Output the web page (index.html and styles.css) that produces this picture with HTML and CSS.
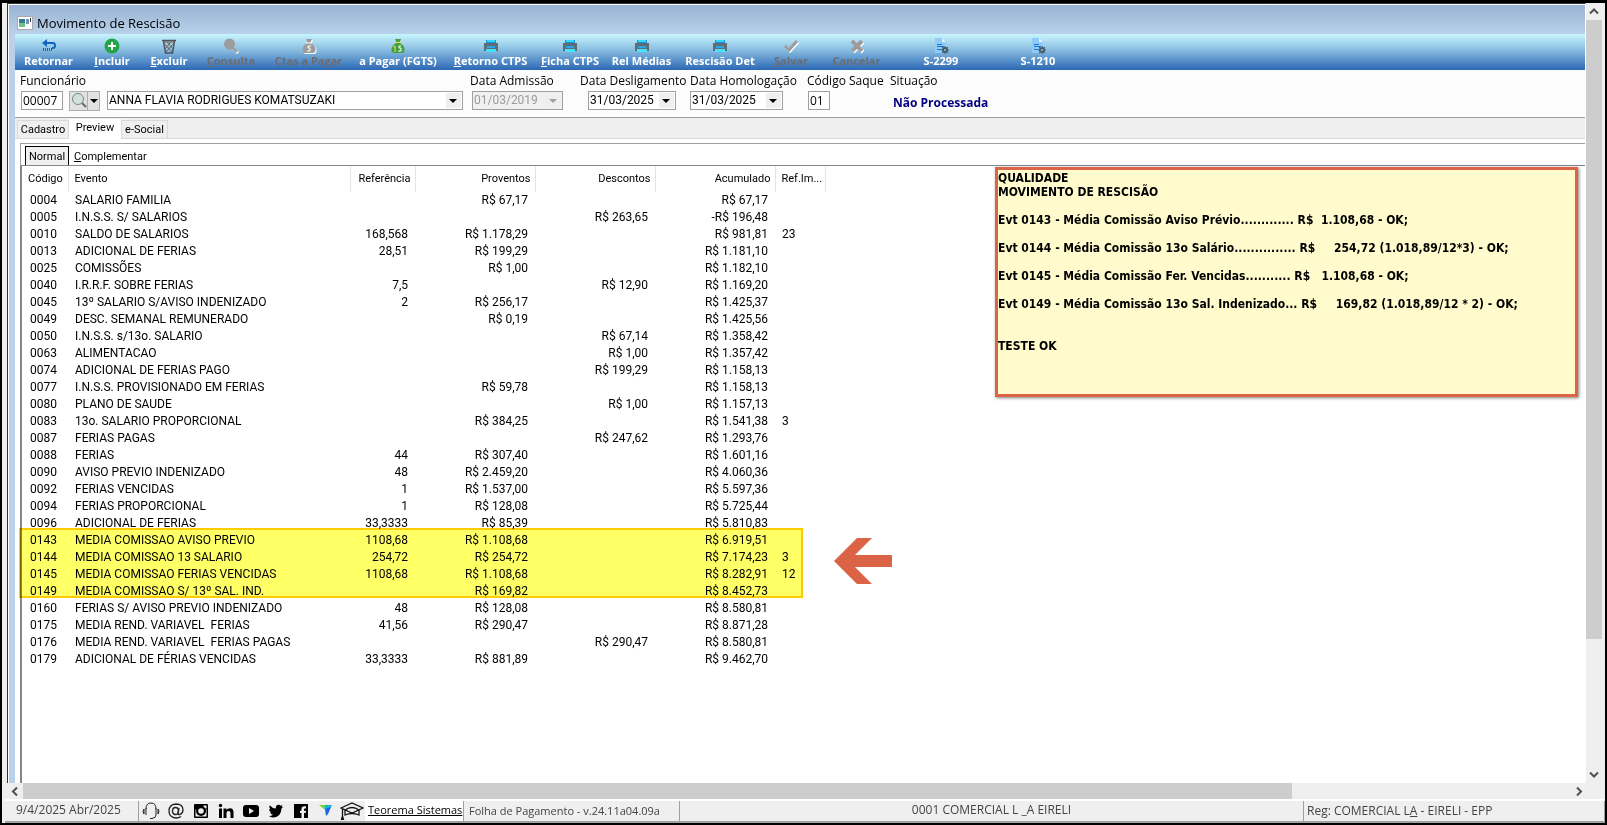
FILE: index.html
```html
<!DOCTYPE html>
<html lang="pt-br">

<head>
    <meta charset="UTF-8">
    <meta name="viewport" content="width=device-width, initial-scale=1.0">
    <title>Movimento de Rescisão</title>
    <link rel="stylesheet" href="styles.css">
</head>

<body>
    <svg class="defs">
        <symbol id="printer" viewBox="0 0 16 16">
            <path fill="#1c8fe0" d="M3 2h10v4H3z" />
            <path fill="#35d8f5" d="M4 2h8v2H4z" />
            <path fill="#5f6b75" d="M1 5h14v8H1z" />
            <path fill="#27a9e8" d="M4 8h8v2H4z" />
            <path fill="#45e2fa" d="M3 11h10v3H3z" />
        </symbol>
        <symbol id="bag" viewBox="0 0 16 16">
            <path d="M5 1h6L9.500 4.500C12 6 15 9 14.500 12.500 14.300 14 13.500 15 12 15H4c-1.500 0-2.300-1-2.500-2.500C1 9 4 6 6.500 4.500z" />
        </symbol>
        <symbol id="doc" viewBox="0 0 16 16">
            <path fill="#90caf9" d="M2 0h7l4 4v11H2z" />
            <path fill="#e1f5fe" d="M9 0l4 4H9z" />
            <path fill="#1976d2" d="M4 6h5v1H4zM4 8h7v1H4zM4 11h4v1H4z" />
            <circle cx="12" cy="12" r="2" fill="none" stroke="#455a64" stroke-width="2" />
            <path stroke="#455a64" d="M12 8v2M12 14v2M8 12h2M14 12h2M9 9l1 1M14 14l1 1M15 9l-1 1M10 14l-1 1" />
        </symbol>
    </svg>

    <div id="screen">
        <div class="work">
            <main class="window">
                <h1 class="title">
                    <svg width="16" height="14" viewBox="0 0 16 14">
                        <path fill="#fff" stroke="#a9a9a9" d="M.5.500h15v13H.5z" />
                        <path fill="#2f7f8f" d="M2 3h6v8H2z" />
                        <path fill="#6fc08a" d="M2 7h6v4H2z" />
                        <path fill="#7d8fb5" d="M9 3h3v5H9z" />
                        <path fill="#234" d="M13 2h1v4h-1z" />
                    </svg>
                    Movimento de Rescisão
                </h1>

                <nav class="toolbar">
                    <button type="button">
                        <svg viewBox="0 0 16 16">
                            <path fill="none" stroke="#1565c0" stroke-width="2" d="M3 5h9q2 0 2 2.500T12 10h-1" />
                            <path fill="#1565c0" d="M1 5l5-4v8z" />
                            <path stroke="#1565c0" d="M2.500 10v3M4.500 10v3M6.500 10v3M8.500 10v3M10.500 10v3" />
                        </svg>
                        Retornar
                    </button>
                    <button type="button">
                        <svg viewBox="0 0 16 16">
                            <circle cx="8" cy="8" r="7.500" fill="#22a447" />
                            <path stroke="#fff" stroke-width="2" d="M8 4v8M4 8h8" />
                        </svg>
                        <span><u>I</u>ncluir</span>
                    </button>
                    <button type="button">
                        <svg viewBox="0 0 16 16">
                            <path fill="none" stroke="#4d5560" stroke-width="1.500" d="M1 2.500h14M2.500 3l2 12h7l2-12" />
                            <path fill="none" stroke="#6b5f5c" d="M3 5l8 9M6 4l6 7M10 4l-6 7M13 5l-8 9M2 4h12" />
                        </svg>
                        <span><u>E</u>xcluir</span>
                    </button>
                    <button type="button" disabled>
                        <svg viewBox="0 0 16 16">
                            <path stroke="#fff" stroke-width="3" d="M10 10l5 5" />
                            <path stroke="#9c9c9c" stroke-width="3" d="M9 9l5 5" />
                            <circle cx="6.500" cy="6" r="5.500" fill="#9c9c9c" />
                        </svg>
                        <span><u>C</u>onsulta</span>
                    </button>
                    <button type="button" disabled>
                        <svg viewBox="0 0 16 16">
                            <use href="#bag" fill="#fff" x="1" y="1" width="16" height="16" />
                            <use href="#bag" fill="#9c9c9c" width="16" height="16" />
                            <path fill="none" stroke="#fff" d="M5 5h6M10 8H7v2h2v3H6" />
                        </svg>
                        Ctas a Pagar
                    </button>
                    <button type="button">
                        <svg viewBox="0 0 16 16">
                            <use href="#bag" fill="#43a047" width="16" height="16" />
                            <path fill="none" stroke="#fff" d="M11 8H9v2h2v3H8" />
                            <path fill="none" stroke="#fdd835" d="M3 9l2-1v6M5 4.500h6" />
                        </svg>
                        a Pagar (FGTS)
                    </button>
                    <button type="button"><svg><use href="#printer" /></svg><span><u>R</u>etorno CTPS</span></button>
                    <button type="button"><svg><use href="#printer" /></svg><span><u>F</u>icha CTPS</span></button>
                    <button type="button"><svg><use href="#printer" /></svg>Rel Médias</button>
                    <button type="button"><svg><use href="#printer" /></svg>Rescisão Det</button>
                    <button type="button" disabled>
                        <svg viewBox="0 0 16 16">
                            <path fill="none" stroke="#fff" stroke-width="3" d="M3 9l4 4 8-9" />
                            <path fill="none" stroke="#9c9c9c" stroke-width="3" d="M2 8l4 4 8-9" />
                        </svg>
                        <span><u>S</u>alvar</span>
                    </button>
                    <button type="button" disabled>
                        <svg viewBox="0 0 16 16">
                            <path stroke="#fff" stroke-width="4" d="M4 4l10 10M14 4L4 14" />
                            <path stroke="#9c9c9c" stroke-width="4" d="M3 3l10 10M13 3L3 13" />
                        </svg>
                        Cancelar
                    </button>
                    <button type="button"><svg><use href="#doc" /></svg>S-2299</button>
                    <button type="button"><svg><use href="#doc" /></svg>S-1210</button>
                </nav>

                <form class="filters">
                    <div class="field">
                        <label for="codigo">Funcionário</label>
                        <div class="row">
                            <input type="text" id="codigo" value="00007">
                            <div class="search">
                                <button type="button" aria-label="Pesquisar">
                                    <svg width="16" height="16" viewBox="0 0 16 16">
                                        <circle cx="7" cy="7" r="5.500" fill="#cfe3dc" stroke="#7b8a86" />
                                        <path stroke="#666" stroke-width="2" d="M11 11l4 4" />
                                    </svg>
                                </button>
                                <button type="button" class="more" aria-label="Mais opções"></button>
                            </div>
                            <div class="combo name">
                                <select aria-label="Nome do funcionário">
                                    <option>ANNA FLAVIA RODRIGUES KOMATSUZAKI</option>
                                </select>
                            </div>
                        </div>
                    </div>
                    <div class="field">
                        <label for="admissao">Data Admissão</label>
                        <div class="combo off">
                            <select id="admissao" disabled>
                                <option>01/03/2019</option>
                            </select>
                        </div>
                    </div>
                    <div class="field">
                        <label for="desligamento">Data Desligamento</label>
                        <div class="combo inset">
                            <select id="desligamento">
                                <option>31/03/2025</option>
                            </select>
                        </div>
                    </div>
                    <div class="field">
                        <label for="homologacao">Data Homologação</label>
                        <div class="combo">
                            <select id="homologacao">
                                <option>31/03/2025</option>
                            </select>
                        </div>
                    </div>
                    <div class="field">
                        <label for="saque">Código Saque</label>
                        <input type="text" id="saque" value="01">
                    </div>
                    <div class="field">
                        <span class="label">Situação</span>
                        <strong class="status">Não Processada</strong>
                    </div>
                </form>

                <div class="tabs">
                    <button type="button">Cadastro</button>
                    <button type="button" class="active">Preview</button>
                    <button type="button">e-Social</button>
                </div>

                <section class="page">
                    <div class="subtabs">
                        <button type="button" class="active">Normal</button>
                        <button type="button"><u>C</u>omplementar</button>
                    </div>
                    <div class="list">
                        <table>
                            <colgroup>
                                <col class="c-cod">
                                <col class="c-evt">
                                <col class="c-ref">
                                <col class="c-val">
                                <col class="c-val">
                                <col class="c-val">
                                <col class="c-imp">
                            </colgroup>
                            <thead>
                                <tr><th>Código</th><th>Evento</th><th>Referência</th><th>Proventos</th><th>Descontos</th><th>Acumulado</th><th>Ref.Im...</th></tr>
                            </thead>
                            <tbody>
                                <tr><td>0004</td><td>SALARIO FAMILIA</td><td></td><td>R$ 67,17</td><td></td><td>R$ 67,17</td><td></td></tr>
                                <tr><td>0005</td><td>I.N.S.S. S/ SALARIOS</td><td></td><td></td><td>R$ 263,65</td><td>-R$ 196,48</td><td></td></tr>
                                <tr><td>0010</td><td>SALDO DE SALARIOS</td><td>168,568</td><td>R$ 1.178,29</td><td></td><td>R$ 981,81</td><td>23</td></tr>
                                <tr><td>0013</td><td>ADICIONAL DE FERIAS</td><td>28,51</td><td>R$ 199,29</td><td></td><td>R$ 1.181,10</td><td></td></tr>
                                <tr><td>0025</td><td>COMISSÕES</td><td></td><td>R$ 1,00</td><td></td><td>R$ 1.182,10</td><td></td></tr>
                                <tr><td>0040</td><td>I.R.R.F. SOBRE FERIAS</td><td>7,5</td><td></td><td>R$ 12,90</td><td>R$ 1.169,20</td><td></td></tr>
                                <tr><td>0045</td><td>13º SALARIO S/AVISO INDENIZADO</td><td>2</td><td>R$ 256,17</td><td></td><td>R$ 1.425,37</td><td></td></tr>
                                <tr><td>0049</td><td>DESC. SEMANAL REMUNERADO</td><td></td><td>R$ 0,19</td><td></td><td>R$ 1.425,56</td><td></td></tr>
                                <tr><td>0050</td><td>I.N.S.S. s/13o. SALARIO</td><td></td><td></td><td>R$ 67,14</td><td>R$ 1.358,42</td><td></td></tr>
                                <tr><td>0063</td><td>ALIMENTACAO</td><td></td><td></td><td>R$ 1,00</td><td>R$ 1.357,42</td><td></td></tr>
                                <tr><td>0074</td><td>ADICIONAL DE FERIAS PAGO</td><td></td><td></td><td>R$ 199,29</td><td>R$ 1.158,13</td><td></td></tr>
                                <tr><td>0077</td><td>I.N.S.S. PROVISIONADO EM FERIAS</td><td></td><td>R$ 59,78</td><td></td><td>R$ 1.158,13</td><td></td></tr>
                                <tr><td>0080</td><td>PLANO DE SAUDE</td><td></td><td></td><td>R$ 1,00</td><td>R$ 1.157,13</td><td></td></tr>
                                <tr><td>0083</td><td>13o. SALARIO PROPORCIONAL</td><td></td><td>R$ 384,25</td><td></td><td>R$ 1.541,38</td><td>3</td></tr>
                                <tr><td>0087</td><td>FERIAS PAGAS</td><td></td><td></td><td>R$ 247,62</td><td>R$ 1.293,76</td><td></td></tr>
                                <tr><td>0088</td><td>FERIAS</td><td>44</td><td>R$ 307,40</td><td></td><td>R$ 1.601,16</td><td></td></tr>
                                <tr><td>0090</td><td>AVISO PREVIO INDENIZADO</td><td>48</td><td>R$ 2.459,20</td><td></td><td>R$ 4.060,36</td><td></td></tr>
                                <tr><td>0092</td><td>FERIAS VENCIDAS</td><td>1</td><td>R$ 1.537,00</td><td></td><td>R$ 5.597,36</td><td></td></tr>
                                <tr><td>0094</td><td>FERIAS PROPORCIONAL</td><td>1</td><td>R$ 128,08</td><td></td><td>R$ 5.725,44</td><td></td></tr>
                                <tr><td>0096</td><td>ADICIONAL DE FERIAS</td><td>33,3333</td><td>R$ 85,39</td><td></td><td>R$ 5.810,83</td><td></td></tr>
                                <tr><td>0143</td><td>MEDIA COMISSAO AVISO PREVIO</td><td>1108,68</td><td>R$ 1.108,68</td><td></td><td>R$ 6.919,51</td><td></td></tr>
                                <tr><td>0144</td><td>MEDIA COMISSAO 13 SALARIO</td><td>254,72</td><td>R$ 254,72</td><td></td><td>R$ 7.174,23</td><td>3</td></tr>
                                <tr><td>0145</td><td>MEDIA COMISSAO FERIAS VENCIDAS</td><td>1108,68</td><td>R$ 1.108,68</td><td></td><td>R$ 8.282,91</td><td>12</td></tr>
                                <tr><td>0149</td><td>MEDIA COMISSAO S/ 13º SAL. IND.</td><td></td><td>R$ 169,82</td><td></td><td>R$ 8.452,73</td><td></td></tr>
                                <tr><td>0160</td><td>FERIAS S/ AVISO PREVIO INDENIZADO</td><td>48</td><td>R$ 128,08</td><td></td><td>R$ 8.580,81</td><td></td></tr>
                                <tr><td>0175</td><td>MEDIA REND. VARIAVEL  FERIAS</td><td>41,56</td><td>R$ 290,47</td><td></td><td>R$ 8.871,28</td><td></td></tr>
                                <tr><td>0176</td><td>MEDIA REND. VARIAVEL  FERIAS PAGAS</td><td></td><td></td><td>R$ 290,47</td><td>R$ 8.580,81</td><td></td></tr>
                                <tr><td>0179</td><td>ADICIONAL DE FÉRIAS VENCIDAS</td><td>33,3333</td><td>R$ 881,89</td><td></td><td>R$ 9.462,70</td><td></td></tr>
                            </tbody>
                        </table>

                        <!-- anotações sobre a lista -->
                        <div class="marker"></div>
                        <svg class="arrow" viewBox="0 0 58 46">
                            <path fill="#dc6446" d="M0 23L23 0h15L21 17h37v12H21l17 17H23z" />
                        </svg>
                        <div class="note">QUALIDADE
MOVIMENTO DE RESCISÃO

Evt 0143 - Média Comissão Aviso Prévio............. R$  1.108,68 - OK;

Evt 0144 - Média Comissão 13o Salário............... R$     254,72 (1.018,89/12*3) - OK;

Evt 0145 - Média Comissão Fer. Vencidas........... R$   1.108,68 - OK;

Evt 0149 - Média Comissão 13o Sal. Indenizado... R$     169,82 (1.018,89/12 * 2) - OK;


TESTE OK</div>
                    </div>
                </section>
            </main>

            <div class="scroll-v">
                <svg viewBox="0 0 16 16"><path d="M4 10l4-4 4 4" /></svg>
                <div class="track"><div class="thumb"></div></div>
                <svg viewBox="0 0 16 16"><path d="M4 6l4 4 4-4" /></svg>
            </div>
        </div>

        <div class="scroll-h">
            <svg viewBox="0 0 16 16"><path d="M10 4L6 8l4 4" /></svg>
            <div class="track"><div class="thumb"></div></div>
            <svg viewBox="0 0 16 16"><path d="M6 4l4 4-4 4" /></svg>
        </div>

        <footer class="statusbar">
            <div class="date">9/4/2025 Abr/2025</div>
            <div class="social">
                <svg viewBox="0 0 18 18">
                    <path fill="none" stroke="#222" d="M4 7Q4 1 9 1t5 6M4 6v7M14 6v7M2 7q-2 2.500 0 5zM16 7q2 2.500 0 5zM14 13q0 3-4 3.500H8" />
                </svg>
                <svg viewBox="0 0 18 18">
                    <path fill="none" stroke="#222" stroke-width="1.300" d="M12 6l-1 5q0 2 2 1.500Q16 11 16 8q0-6-7-6-7 .5-7 7t7 7q3 0 5-1.500" />
                    <ellipse cx="8.500" cy="9" rx="3" ry="3.500" fill="none" stroke="#222" stroke-width="1.300" />
                </svg>
                <svg viewBox="0 0 18 18">
                    <rect x="2" y="2" width="14" height="14" rx="1" />
                    <path fill="#efefef" d="M11.500 3.500h3v3h-3zM3.500 7.500h11v7h-11z" />
                    <circle cx="9" cy="9" r="5" />
                    <circle cx="9" cy="9" r="2.800" fill="#efefef" />
                </svg>
                <svg viewBox="0 0 18 18">
                    <path d="M2 6.500h3V16H2zM6.500 6.500h3V8q1-1.800 3.500-1.800 3.500 0 3.500 4V16h-3v-5q0-2-2-2t-2 2v5h-3z" />
                    <circle cx="3.500" cy="3.500" r="1.700" />
                </svg>
                <svg viewBox="0 0 18 18">
                    <rect x="1" y="3" width="16" height="12" rx="3" />
                    <path fill="#efefef" d="M7 6l5 3-5 3z" />
                </svg>
                <svg viewBox="0 0 18 18">
                    <path d="M16 5l-1.500 1.500Q14 15 6.500 15.500 4 15.500 2 14q2.500 0 4-1.200-2.200-.3-3-2.200h1.300Q2 9.500 2 7l1.300.5Q1.500 5.500 2.700 3.300 5 6.200 8.800 6.500 8.500 3 11.500 2.800q1.500 0 2.300 1l1.800-.8-1 1.800z" />
                </svg>
                <svg viewBox="0 0 18 18">
                    <path d="M2 2h14v14H2z" />
                    <path fill="#efefef" d="M9.500 16v-5H8V8.800h1.500V7q0-2.800 2.800-2.800H14v2.200h-1.200q-.8 0-.8.900v1.500h2l-.3 2.200H12v5z" />
                </svg>
                <svg viewBox="0 0 18 18">
                    <path fill="#7ed321" d="M2 3h6L7 7z" />
                    <path fill="#12b8c8" d="M8 3h7l-2 4H7z" />
                    <path fill="#1a63e8" d="M8 7l6-2-3 7-2 2z" />
                </svg>
                <svg class="cap" viewBox="0 0 24 18">
                    <path fill="none" stroke="#111" stroke-width="1.300" d="M1 6l11-5 11 5-11 5zM5 8v5q7-3 14 0V8M5 8q7-5 14 0M2.500 7v8M2.500 14l-1 3.500h2z" />
                </svg>
            </div>
            <a class="site" href="#">Teorema Sistemas</a>
            <div class="version">Folha de Pagamento - v.24.11a04.09a</div>
            <div class="company">0001 COMERCIAL L _A EIRELI</div>
            <div class="reg">Reg: COMERCIAL L<u>A</u> - EIRELI - EPP</div>
        </footer>
    </div>
</body>

</html>
```
FILE: styles.css
```css
* {
    margin: 0;
    padding: 0;
    box-sizing: border-box;
}

body {
    background: #000;
    color: #000;
    font: 12px/16px "Open Sans", "Noto Sans", sans-serif;
}

button, input, select {
    font: inherit;
    color: inherit;
    border: none;
    background: none;
}

.defs {
    display: none;
}

#screen {
    display: flex;
    flex-direction: column;
    min-height: 100vh;
    border: 2px solid #000;
    border-top-width: 3px;
    background: #efefef;
}

.work {
    flex: 1;
    display: flex;
    padding-right: 3px;
}

.window {
    flex: 1;
    min-width: 0;
    display: flex;
    flex-direction: column;
    margin-left: 5px;
    border-left: 1px solid #333;
    border-top: 1px solid #333;
    border-right: 1px solid #fff;
    background: #b9d1ea;
    padding-left: 7px;
    box-shadow: inset 1px 1px #fff;
}

/* barra de título */
.title {
    display: flex;
    align-items: center;
    gap: 4px;
    height: 29px;
    margin: 1px 0 0 -6px;
    padding: 6px 0 0 8px;
    font-size: 13px;
    font-weight: normal;
    background: linear-gradient(#98b3d1, #b9d1ea);
}

/* botões */
.toolbar {
    display: grid;
    grid-template-columns: 67px 60px 54px 70px 85px 94px 91px 68px 75px 82px 60px 71px 98px 96px;
    height: 36px;
    background: linear-gradient(#c8f5fd, #8fc3e4 40%, #2c68b4);
}

.toolbar button {
    display: flex;
    flex-direction: column;
    align-items: center;
    padding-top: 4px;
    color: #fff;
    font-size: 11px;
    font-weight: bold;
    line-height: 14px;
    white-space: nowrap;
}

.toolbar svg {
    width: 16px;
    height: 16px;
    flex: none;
}

.toolbar button:disabled {
    color: #6b6b70;
}

/* dados do funcionário */
.filters {
    display: grid;
    grid-template-columns: 450px 110px 110px 117px 83px auto;
    height: 48px;
    padding: 3px 0 0 5px;
    background: #fcfcfc;
    border-bottom: 1px solid #a0a0a0;
}

.field label, .field .label {
    display: block;
    height: 18px;
    white-space: nowrap;
}

.row {
    display: flex;
    padding-left: 1px;
}

.filters input {
    width: 42px;
    height: 19px;
    padding-left: 1px;
    background: #fff;
    border: 1px solid #a0a0a0;
}

.filters #saque {
    width: 22px;
    margin-left: 1px;
}

.search {
    display: flex;
    width: 31px;
    height: 20px;
    margin: 0 7px 0 6px;
    border: 1px solid #adadad;
    background: #e1e1e1;
}

.search button {
    flex: 1;
}

.search .more {
    flex: 0 0 12px;
    border-left: 1px solid #adadad;
}

.more::before, .combo::after {
    content: "";
    display: inline-block;
    border: 4px solid transparent;
    border-top-color: #000;
    border-bottom: 0;
}

.more::before {
    margin-bottom: 2px;
}

.combo {
    position: relative;
    width: 93px;
    height: 19px;
    background: #fff;
    border: 1px solid #a0a0a0;
    font: 12px/17px Roboto, sans-serif;
}

.combo select {
    appearance: none;
    width: 100%;
    height: 17px;
    padding-left: 1px;
    background: linear-gradient(#efefef, #efefef) no-repeat right 1px center / 15px 15px;
}

.combo::after {
    position: absolute;
    right: 5px;
    top: 7px;
}

.combo.name {
    width: 356px;
}

.combo.inset {
    width: 88px;
    margin-left: 8px;
}

.combo.off {
    background: #f0f0f0;
    margin-left: 2px;
    width: 91px;
}

.combo.off select {
    color: #9a9a9a;
    opacity: 1;
}

.combo.off::after {
    border-top-color: #a0a0a0;
}

.status {
    display: block;
    padding: 4px 0 0 3px;
    color: #000080;
}

/* abas */
.tabs, .subtabs {
    font: 11px/14px Roboto, sans-serif;
}

.tabs {
    display: flex;
    align-items: flex-end;
    height: 21px;
    padding-left: 2px;
    background: #efefef;
    border-bottom: 1px solid #d9d9d9;
}

.tabs button {
    width: 52px;
    height: 18px;
    border: 1px solid #d9d9d9;
    border-bottom: 0;
}

.tabs button:last-child {
    width: 47px;
}

.tabs .active {
    height: 20px;
    margin-bottom: -1px;
    padding-bottom: 4px;
    background: #fff;
    border-color: #fff;
}

.page {
    flex: 1;
    display: flex;
    flex-direction: column;
    padding: 4px 0 0 5px;
    background: #fff;
}

.subtabs {
    display: flex;
    align-items: flex-end;
    height: 23px;
    padding-left: 4px;
    border-top: 1px solid #a0a0a0;
    border-left: 1px solid #a0a0a0;
    border-bottom: 1px solid #828790;
}

.subtabs button {
    height: 19px;
    padding: 2px 5px 0;
}

.subtabs .active {
    width: 44px;
    padding: 2px 0 0;
    background: #f0f0f0;
    border: 1px solid #000;
    border-bottom: 0;
}

/* lista de eventos */
.list {
    flex: 1;
    position: relative;
    border-left: 2px solid #828790;
    font: 12px/14px Roboto, sans-serif;
}

table {
    width: 803px;
    table-layout: fixed;
    border-collapse: collapse;
    white-space: pre;
}

.c-cod {
    width: 46px;
}

.c-evt {
    width: 282px;
}

.c-ref {
    width: 65px;
}

.c-val {
    width: 120px;
}

.c-imp {
    width: 50px;
}

th {
    height: 26px;
    padding: 0 4px 0 6px;
    font-size: 11px;
    font-weight: normal;
    text-align: left;
    border-right: 1px solid #e5e5e5;
}

td {
    height: 17px;
    padding: 0 7px;
    line-height: 17px;
}

td:first-child {
    padding: 0 0 0 8px;
}

th:nth-child(n+3):nth-child(-n+6),
td:nth-child(n+3):nth-child(-n+6) {
    text-align: right;
}

.marker {
    position: absolute;
    left: -3px;
    top: 362px;
    width: 784px;
    height: 70px;
    background: #ffff66;
    border: 2px solid #ffcc00;
    mix-blend-mode: multiply;
}

.arrow {
    position: absolute;
    left: 812px;
    top: 372px;
    width: 58px;
    height: 46px;
}

.note {
    position: absolute;
    right: 7px;
    top: 1px;
    width: 583px;
    height: 230px;
    padding: 1px 0;
    background: #fffbcc;
    border: 3px solid #dc6446;
    box-shadow: 1px 1px 3px rgba(0, 0, 0, 0.5);
    font: bold 12px/14px "DejaVu Sans Condensed", sans-serif;
    white-space: pre;
}

/* barras de rolagem */
.scroll-v {
    display: flex;
    flex-direction: column;
    width: 16px;
    background: #efefef;
}

.scroll-v svg, .scroll-h svg {
    flex: none;
    width: 16px;
    height: 17px;
    fill: none;
    stroke: #505050;
    stroke-width: 2;
}

.track {
    flex: 1;
}

.thumb {
    background: #cdcdcd;
}

.scroll-v .thumb {
    height: 83%;
}

.scroll-h {
    display: flex;
    height: 16px;
    padding: 0 18px 0 5px;
}

.scroll-h .thumb {
    width: 82%;
    height: 16px;
}

/* rodapé */
.statusbar {
    display: flex;
    height: 24px;
    margin-left: 3px;
    border-top: 2px solid #fff;
    border-bottom: 2px solid #a0a0a0;
    color: #444;
    line-height: 18px;
}

.statusbar > * {
    border-right: 1px solid #a0a0a0;
    white-space: nowrap;
}

.date {
    width: 134px;
    padding-left: 11px;
}

.social {
    display: flex;
    gap: 7px;
    align-items: center;
    width: 226px;
    padding-left: 3px;
}

.statusbar .social {
    border-right: 0;
}

.social svg {
    flex: none;
    width: 18px;
    height: 18px;
}

.social .cap {
    width: 24px;
    margin-left: -2px;
}

.site {
    width: 99px;
    padding-left: 3px;
    background: #fff;
    color: #000;
    font-size: 11px;
}

.version {
    width: 216px;
    padding: 1px 0 0 5px;
    font-size: 11px;
}

.company {
    flex: 1;
    text-align: center;
}

.reg {
    width: 301px;
    padding: 1px 0 0 3px;
}
```
